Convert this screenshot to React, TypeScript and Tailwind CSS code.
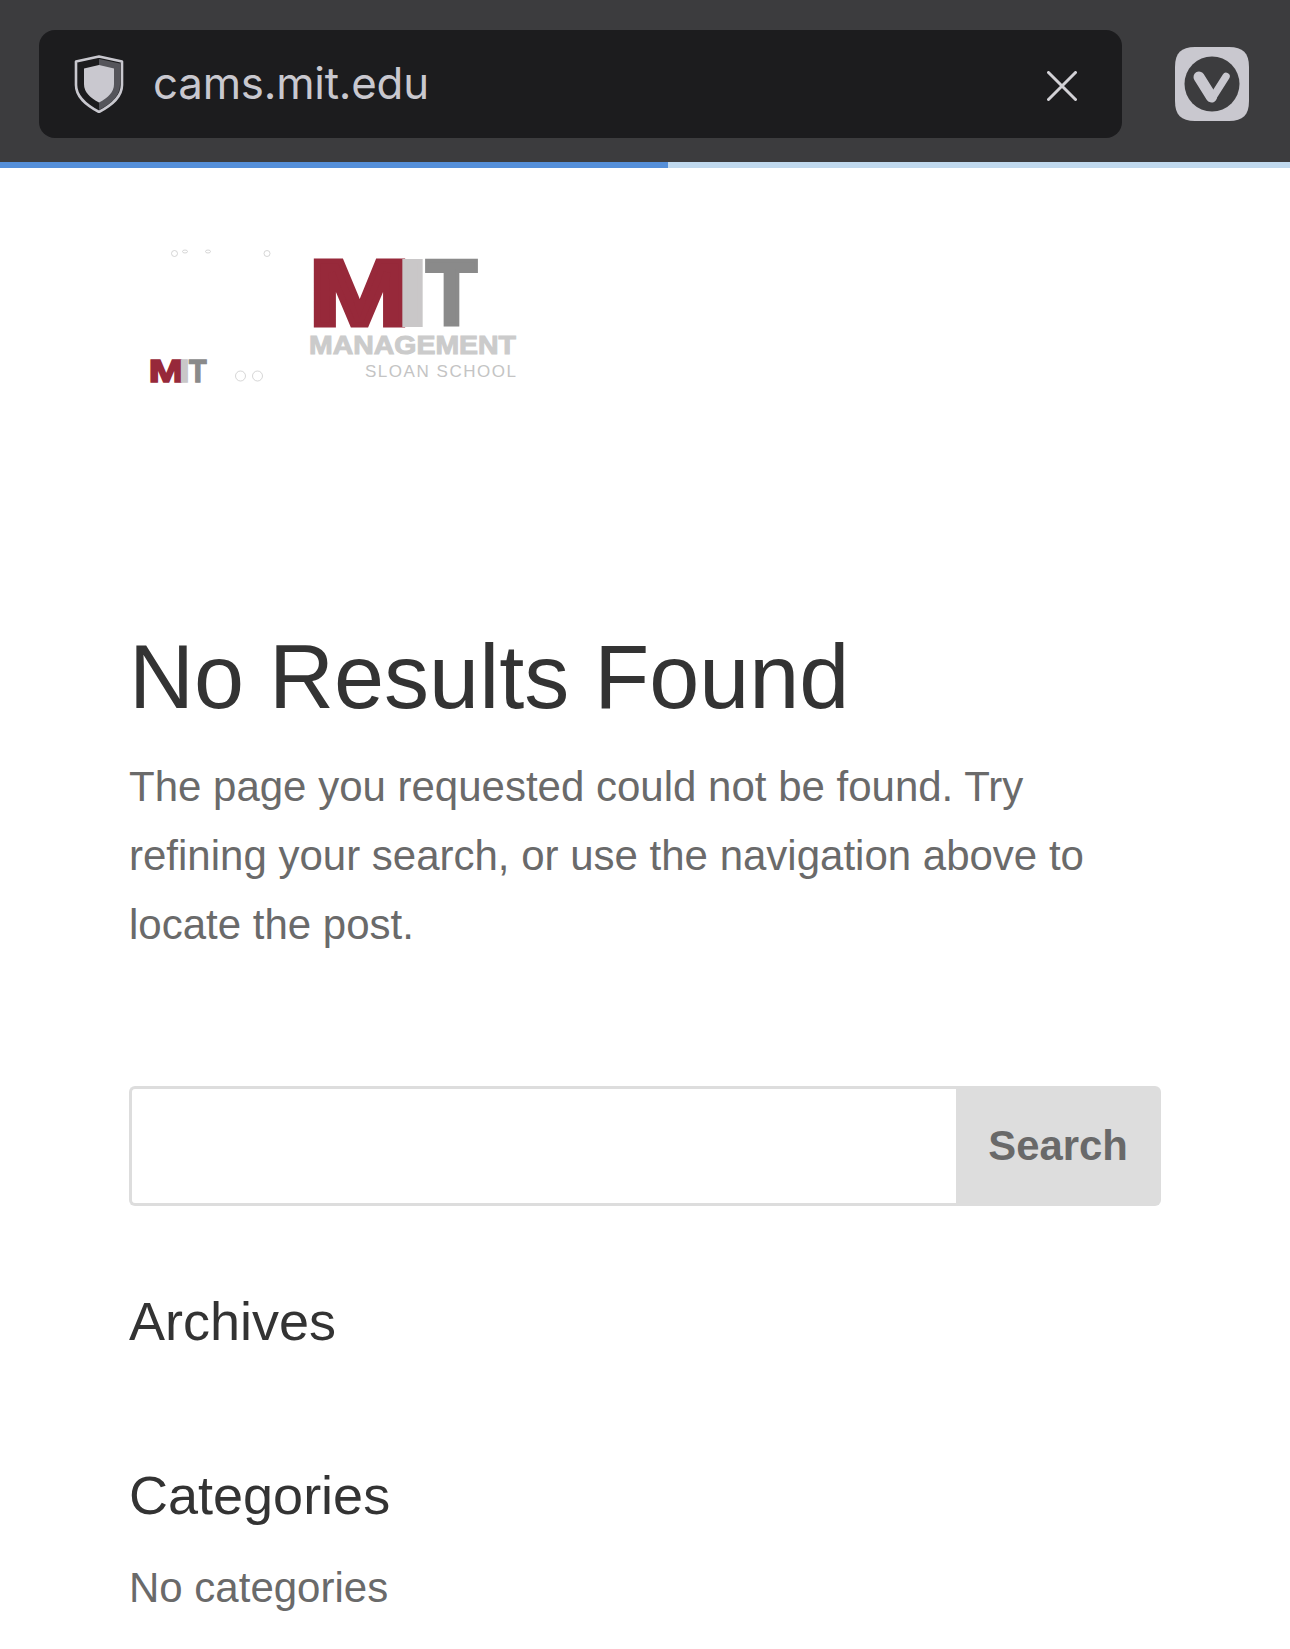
const sans = "font-['Liberation_Sans',Arial,sans-serif]";

function Shield() {
  return (
    <svg width="50" height="58" viewBox="0 0 50 58" className="shrink-0">
      <path d="M25 4 L46 8.5 V30 C46 41 37 48.5 25 55 Z" fill="#55555b" />
      <path d="M25 1.5 L48 6.5 V30 C48 42 38 50 25 57 C12 50 2 42 2 30 V6.5 Z" fill="none" stroke="#c9c8cf" strokeWidth="2.6" strokeLinejoin="round" />
      <path d="M25 10 L40 13.5 V29 C40 37 34 43 25 47.5 C16 43 10 37 10 29 V13.5 Z" fill="#c9c8cf" />
    </svg>
  );
}

function Vivaldi() {
  return (
    <svg width="74" height="74" viewBox="0 0 74 74" className="shrink-0">
      <path d="M20 0 H54 C68 0 74 6 74 20 V54 C74 68 68 74 54 74 H20 C6 74 0 68 0 54 V20 C0 6 6 0 20 0 Z" fill="#c9c8cf" />
      <circle cx="37" cy="37" r="27.5" fill="#3c3c3e" />
      <path d="M24 30 L36.5 50" fill="none" stroke="#c9c8cf" strokeWidth="11" strokeLinecap="round" />
      <path d="M51 29.5 L38 50" fill="none" stroke="#c9c8cf" strokeWidth="7.5" strokeLinecap="round" />
    </svg>
  );
}

function Ring({ cx, cy, r = 3 }: { cx: number; cy: number; r?: number }) {
  return <circle cx={cx} cy={cy} r={r} fill="none" stroke="#c4c4c4" strokeWidth="0.7" />;
}

function Mit({ x, y, k }: { x: number; y: number; k: number }) {
  return (
    <g transform={`translate(${x} ${y}) scale(${k})`} fontFamily="'Liberation Sans', Arial, sans-serif" fontWeight="700" fontSize="92">
      <text x="-4" y="-2" fill="#97293a" stroke="#97293a" strokeWidth="5" strokeLinejoin="miter" textLength="101" lengthAdjust="spacingAndGlyphs">M</text>
      <text x="84.5" y="-2" fill="#c9c7c8" stroke="#c9c7c8" strokeWidth="4" strokeLinejoin="miter" textLength="30" lengthAdjust="spacingAndGlyphs">I</text>
      <text x="113" y="-2" fill="#8a8a8a" stroke="#8a8a8a" strokeWidth="4" strokeLinejoin="miter" textLength="51" lengthAdjust="spacingAndGlyphs">T</text>
    </g>
  );
}

function Logo() {
  return (
    <svg width="400" height="170" viewBox="0 0 400 170" className="block">
      <Ring cx={44.5} cy={23.5} r={3} />
      <ellipse cx={55} cy={21.5} rx={2.5} ry={1.5} fill="none" stroke="#c4c4c4" strokeWidth="0.7" />
      <ellipse cx={78} cy={21.5} rx={2.5} ry={1.5} fill="none" stroke="#c4c4c4" strokeWidth="0.7" />
      <Ring cx={137} cy={23.5} r={3} />
      <Ring cx={110.5} cy={146} r={5} />
      <Ring cx={127.5} cy={146} r={5} />
      <Mit x={20} y={153} k={0.345} />
      <Mit x={183} y={97} k={1} />
      <text x="179" y="124" fontFamily="'Liberation Sans', Arial, sans-serif" fontWeight="700" fontSize="26" fill="#cbcbcb" stroke="#cbcbcb" strokeWidth="1" textLength="207" lengthAdjust="spacingAndGlyphs">MANAGEMENT</text>
      <text x="235" y="147" fontFamily="'Liberation Sans', Arial, sans-serif" fontSize="17" fill="#c4c4c4" textLength="151" lengthAdjust="spacing">SLOAN SCHOOL</text>
    </svg>
  );
}

export default function App() {
  return (
    <div className={`w-[1290px] h-[1649px] overflow-hidden bg-white ${sans}`}>
      <header className="h-[162px] bg-[#3c3c3e] flex items-start pl-[39px] pt-[30px]">
        <div className="w-[1083px] h-[108px] rounded-[16px] bg-[#1c1c1e] flex items-center pl-[35px] pr-[45px]">
          <Shield />
          <span className="ml-[29px] text-[43.8px] leading-none text-[#c9c8cf] font-['Inter',sans-serif] tracking-[-0.2px] grow">cams.mit.edu</span>
          <svg width="30" height="30" viewBox="0 0 30 30" className="shrink-0 mt-[3px]">
            <path d="M1.5 1.5 L28.5 28.5 M28.5 1.5 L1.5 28.5" stroke="#d2d1d6" strokeWidth="3" strokeLinecap="round" />
          </svg>
        </div>
        <div className="ml-[53px] mt-[17px]">
          <Vivaldi />
        </div>
      </header>
      <div className="h-[6px] bg-[#c0d9ee]">
        <div className="h-full w-[668px] bg-[#558fd9]" />
      </div>
      <div className="px-[129px]">
        <div className="pt-[62px] ml-[1px]">
          <Logo />
        </div>
        <h1 className="mt-[227px] text-[90px] leading-[100px] text-[#333333]">No Results Found</h1>
        <p className="mt-[25px] text-[42px] leading-[69px] text-[#6a6a6a]">
          The page you requested could not be found. Try
          <br />
          refining your search, or use the navigation above to
          <br />
          locate the post.
        </p>
        <form className="mt-[127px] w-[1032px] h-[120px] flex">
          <div className="grow rounded-l-[6px] border-[3px] border-r-0 border-[#dddddd] bg-white" />
          <div className="w-[205px] rounded-r-[6px] bg-[#dddddd] flex items-center justify-center text-[41.8px] font-bold text-[#696969] pr-[1px]">
            Search
          </div>
        </form>
        <h2 className="mt-[85px] text-[54px] leading-[60px] text-[#333333]">Archives</h2>
        <h2 className="mt-[114px] text-[54px] leading-[60px] text-[#333333]">Categories</h2>
        <p className="mt-[33px] text-[42px] leading-[60px] text-[#6a6a6a]">No categories</p>
      </div>
    </div>
  );
}
